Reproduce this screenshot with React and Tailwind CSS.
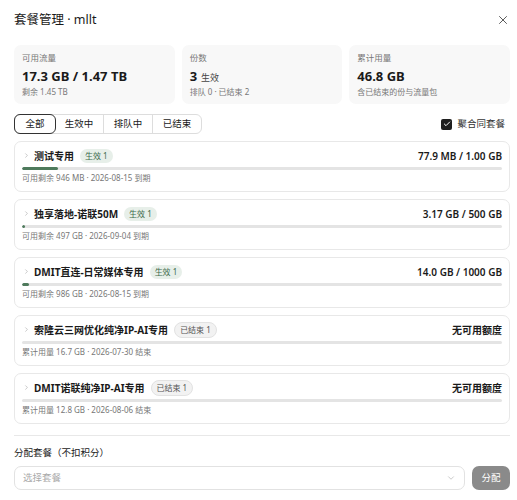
import { X, ChevronRight, ChevronDown, Check } from "lucide-react";

const stats = [
  { label: "可用流量", value: "17.3 GB / 1.47 TB", sub: "剩余 1.45 TB" },
  { label: "份数", value: "3", unit: "生效", sub: "排队 0 · 已结束 2" },
  { label: "累计用量", value: "46.8 GB", sub: "含已结束的份与流量包" },
];

const plans = [
  { name: "测试专用", tag: "生效 1", active: true, right: "77.9 MB / 1.00 GB", pct: 7.6, sub: "可用剩余 946 MB · 2026-08-15 到期" },
  { name: "独享落地-诺联50M", tag: "生效 1", active: true, right: "3.17 GB / 500 GB", pct: 0.63, sub: "可用剩余 497 GB · 2026-09-04 到期" },
  { name: "DMIT直连-日常媒体专用", tag: "生效 1", active: true, right: "14.0 GB / 1000 GB", pct: 1.4, sub: "可用剩余 986 GB · 2026-08-15 到期" },
  { name: "索隆云三网优化纯净IP-AI专用", tag: "已结束 1", active: false, right: "无可用额度", pct: 0, sub: "累计用量 16.7 GB · 2026-07-30 结束" },
  { name: "DMIT诺联纯净IP-AI专用", tag: "已结束 1", active: false, right: "无可用额度", pct: 0, sub: "累计用量 12.8 GB · 2026-08-06 结束" },
];

const tabs = ["全部", "生效中", "排队中", "已结束"];

function PlanCard({ plan }) {
  return (
    <div className="h-[51px] border border-[#e8e8e8] rounded-[7px] px-[7px] pt-[6px] bg-white">
      <div className="flex items-center justify-between h-[15px]">
        <div className="flex items-center">
          <ChevronRight size={7} strokeWidth={1.5} className="text-[#888] ml-[1px] mr-[4px]" />
          <span className="text-[10px] leading-none font-bold text-[#1a1a1a] whitespace-nowrap">{plan.name}</span>
          <span
            className={
              "ml-[6px] text-[8px] leading-none px-[5px] py-[3px] rounded-full whitespace-nowrap " +
              (plan.active ? "bg-[#e7efe9] text-[#3d6b4c]" : "bg-[#f2f2f2] text-[#555] border border-[#e2e2e2]")
            }
          >
            {plan.tag}
          </span>
        </div>
        <span className="text-[10px] leading-none font-semibold text-[#1a1a1a] whitespace-nowrap">{plan.right}</span>
      </div>
      <div className="mt-[4px] h-[3px] bg-[#e4e4e4] rounded-full overflow-hidden">
        <div className="h-full bg-[#4e7a5c] rounded-full" style={{ width: plan.pct + "%", minWidth: plan.pct > 0 ? 3 : 0 }} />
      </div>
      <div className="mt-[2px] h-[12px] flex items-center text-[8px] leading-none text-[#777]">{plan.sub}</div>
    </div>
  );
}

export default function App() {
  return (
    <div className="w-[517px] h-[500px] overflow-hidden bg-white pl-[14px] pr-[7px] pt-[8px] font-['Noto_Sans','Noto_Sans_CJK_SC',sans-serif] text-[#1a1a1a]">
      <div className="flex items-center justify-between h-[24px]">
        <h1 className="text-[12.5px] leading-none font-normal">套餐管理 · mllt</h1>
        <X size={14} strokeWidth={1.5} className="text-[#444] mr-[0px]" />
      </div>

      <div className="grid grid-cols-3 gap-[7px] mt-[13px]">
        {stats.map((s) => (
          <div key={s.label} className="h-[59px] bg-[#f8f8f8] rounded-[7px] px-[8px] pt-[7px]">
            <div className="h-[12px] flex items-center text-[8.5px] leading-none text-[#777]">{s.label}</div>
            <div className="mt-[4px] h-[16px] flex items-baseline text-[13px] leading-[16px] font-bold whitespace-nowrap">
              {s.value}
              {s.unit && <span className="ml-[4px] text-[9px] font-normal text-[#444]">{s.unit}</span>}
            </div>
            <div className="mt-[2px] h-[11px] flex items-center text-[8px] leading-none text-[#777]">{s.sub}</div>
          </div>
        ))}
      </div>

      <div className="flex items-center justify-between mt-[10px] h-[20px]">
        <div className="flex border border-[#ddd] rounded-[6px] h-[20px]">
          {tabs.map((t, i) => (
            <div
              key={t}
              className={
                "flex items-center justify-center text-[9.5px] leading-none whitespace-nowrap " +
                (i === 0
                  ? "border border-[#333] rounded-[6px] -m-px w-[42px] h-[20px]"
                  : i === 1
                  ? "w-[48px]"
                  : "border-l border-[#ddd] w-[49px]")
              }
            >
              {t}
            </div>
          ))}
        </div>
        <label className="flex items-center gap-[5px] text-[9.5px] leading-none text-[#333] mr-[5px]">
          <span className="w-[11px] h-[11px] bg-[#1f1f1f] rounded-[2px] flex items-center justify-center">
            <Check size={8} strokeWidth={3} className="text-white" />
          </span>
          聚合同套餐
        </label>
      </div>

      <div className="flex flex-col gap-[7px] mt-[7px]">
        {plans.map((p) => (
          <PlanCard key={p.name} plan={p} />
        ))}
      </div>

      <div className="border-t border-[#e8e8e8] mt-[11px] pt-[11px]">
        <div className="h-[12px] flex items-center text-[9.5px] leading-none text-[#222]">分配套餐（不扣积分）</div>
        <div className="flex gap-[7px] mt-[7px]">
          <div className="flex-1 h-[24px] border border-[#e2e2e2] rounded-[7px] flex items-center justify-between px-[8px]">
            <span className="text-[9.5px] leading-none text-[#aaa]">选择套餐</span>
            <ChevronDown size={10} strokeWidth={1.5} className="text-[#aaa]" />
          </div>
          <button className="w-[38px] h-[24px] rounded-[7px] bg-[#8a8a8a] text-white text-[9.5px] leading-none">分配</button>
        </div>
      </div>
    </div>
  );
}
